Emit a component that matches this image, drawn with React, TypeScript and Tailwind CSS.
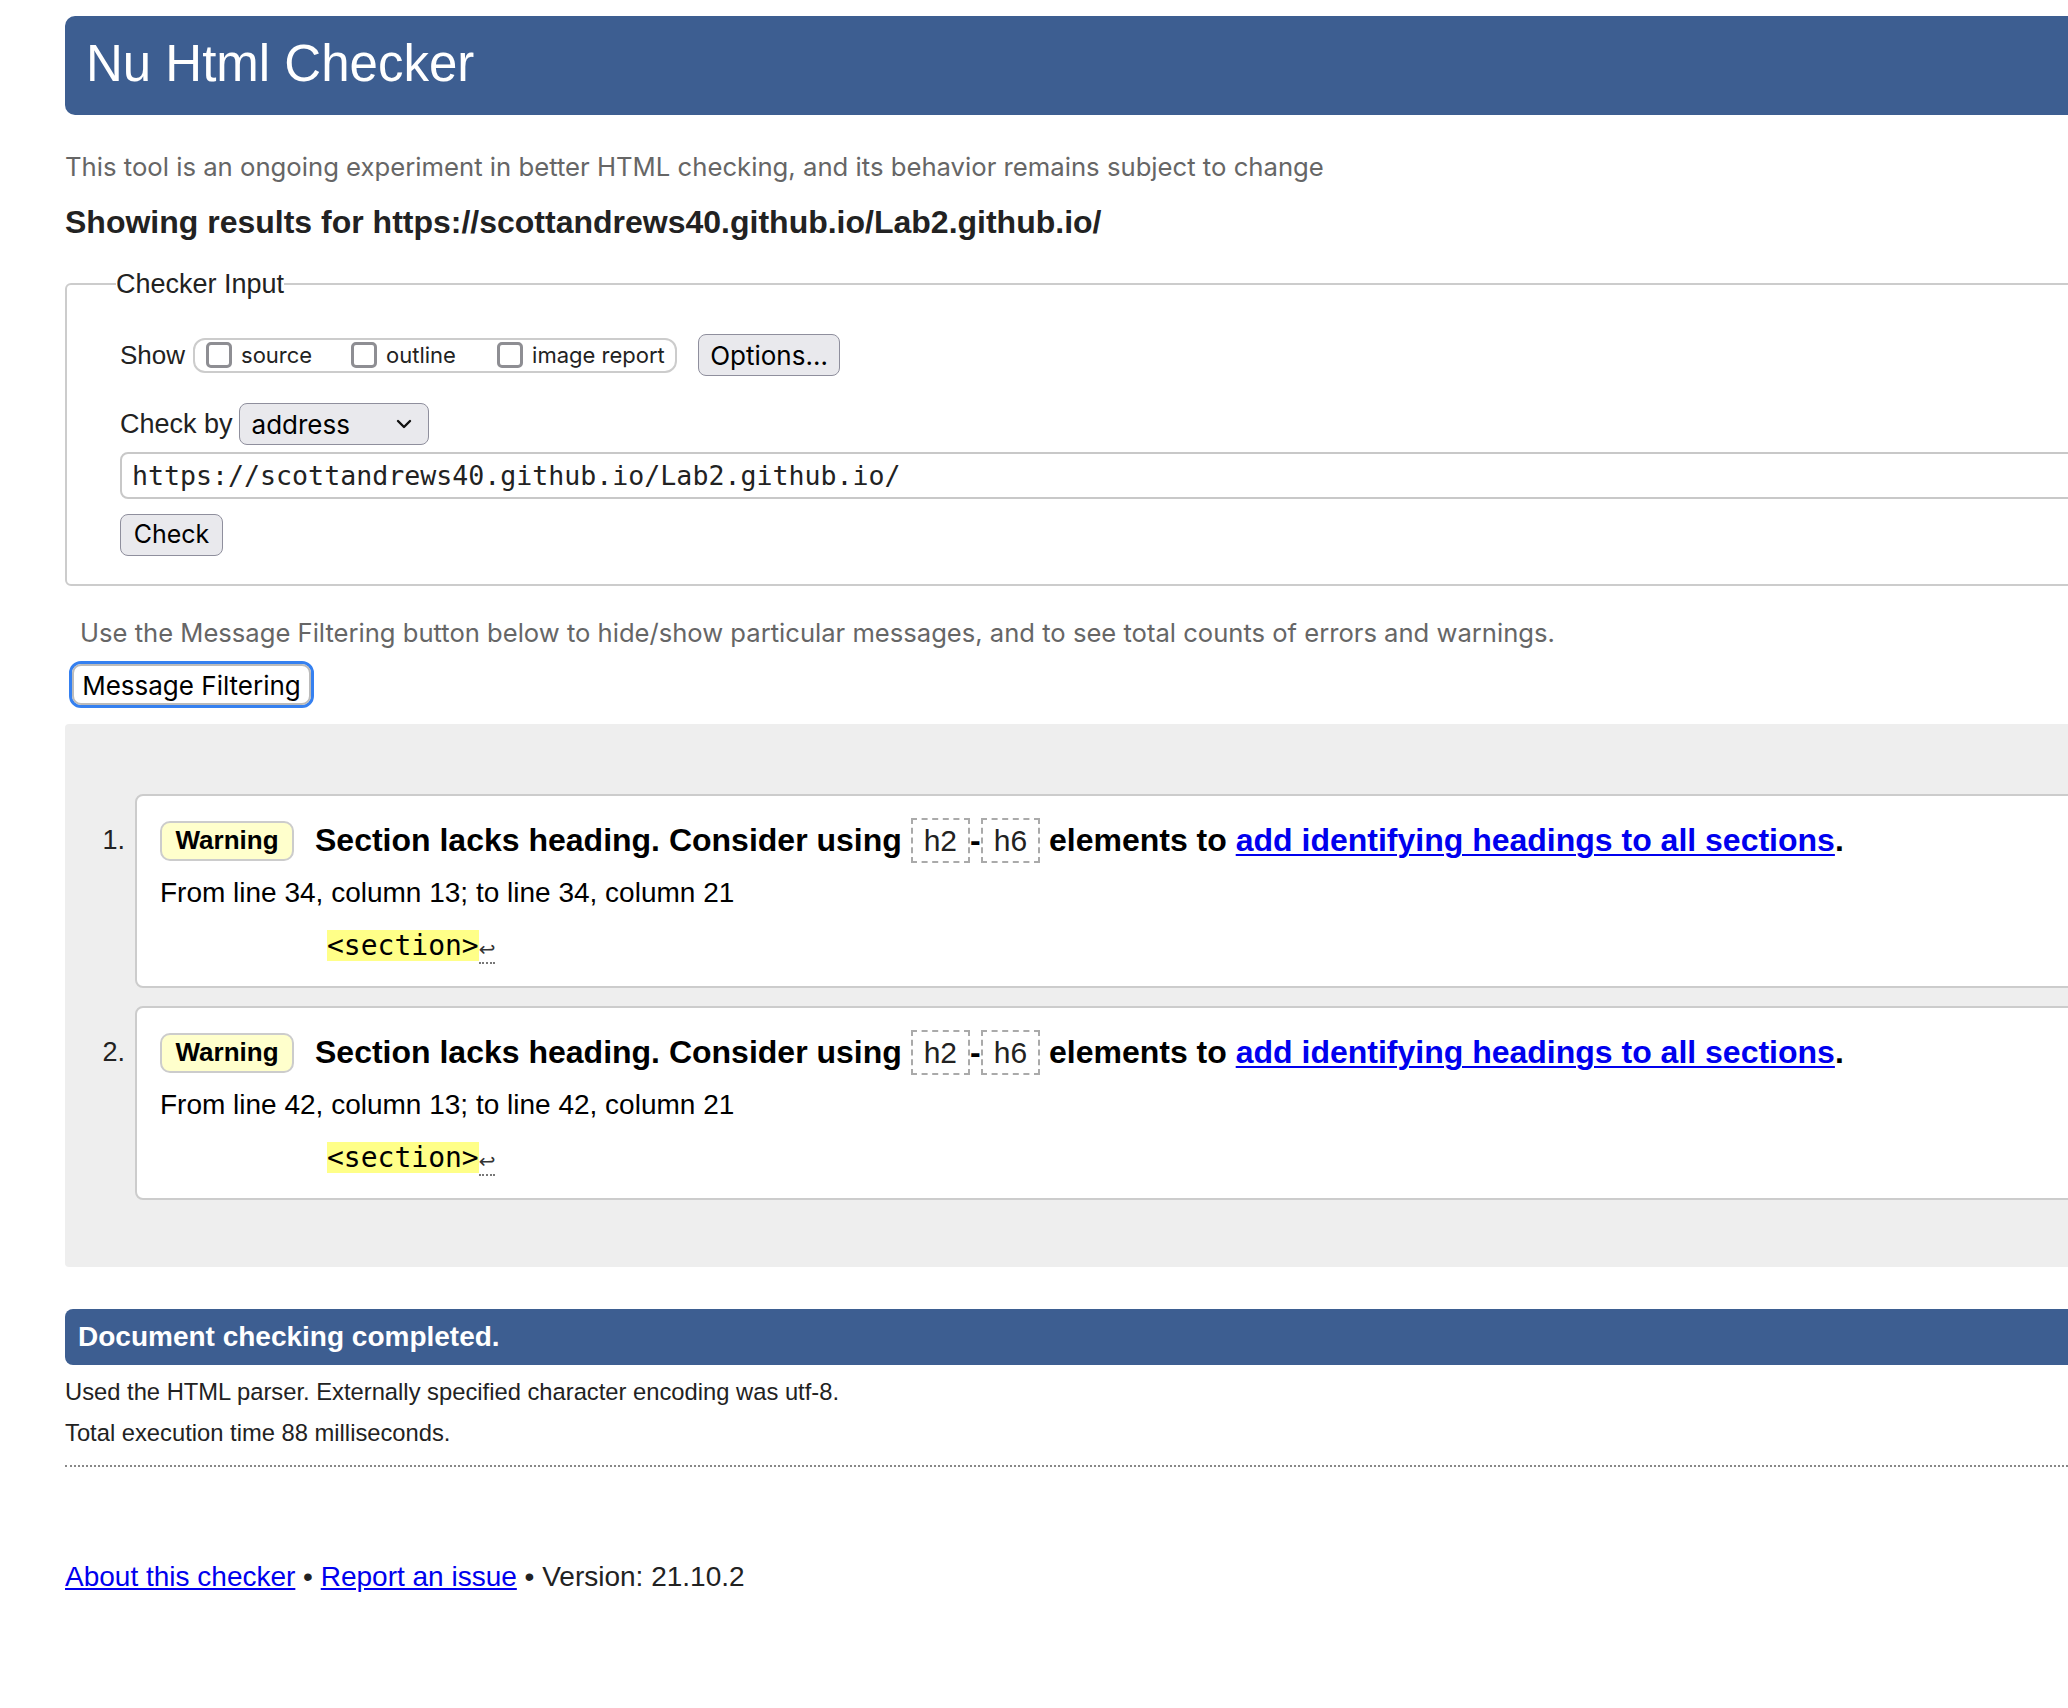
import React from "react";

const SANS = "font-['Liberation_Sans',Arial,Helvetica,sans-serif]";
const SYS = "font-['Inter','Noto_Sans',sans-serif]";
const MONO = "font-['DejaVu_Sans_Mono','Liberation_Mono',monospace]";

function CodeBox({ children }: { children: React.ReactNode }) {
  return (
    <code className="inline-block align-top h-[45px] leading-[41px] px-[11px] border-2 border-dashed border-[#aaaaaa] font-['Liberation_Sans',Arial,sans-serif] font-normal text-[30px] text-[#222]">
      {children}
    </code>
  );
}

function Msg({ n, from }: { n: number; from: string }) {
  return (
    <li className="flex items-start">
      <div className="w-[35px] pr-[10px] mt-[24px] h-[45px] flex items-center justify-end text-[27px] text-[#222]">
        {n}.
      </div>
      <div className="flex-1 bg-white border-2 border-[#cccccc] rounded-l-[8px] pl-[23px] pt-[22px] pb-[25px]">
        <div className="flex items-center h-[45px]">
          <span className="h-[40px] w-[134px] shrink-0 rounded-[10px] border-2 border-[#cccccc] bg-[#ffffcc] flex items-center justify-center text-[26px] font-bold text-black">
            Warning
          </span>
          <span className="ml-[21px] text-[32px] font-bold text-black leading-[45px] whitespace-nowrap">
            Section lacks heading. Consider using{" "}
            <CodeBox>h2</CodeBox>-<CodeBox>h6</CodeBox> elements to{" "}
            <a href="#" className="text-[#0000ee] underline decoration-2 underline-offset-[3px]">
              add identifying headings to all sections
            </a>
            .
          </span>
        </div>
        <div className="mt-[14px] text-[28px] leading-[32px] text-black">{from}</div>
        <div className="mt-[21px] ml-[167px] flex items-start h-[31px]">
          <span className={`${MONO} text-[28px] leading-[31px] bg-[#ffff88] text-black`}>&lt;section&gt;</span>
          <span className="font-['DejaVu_Sans',sans-serif] text-[20px] leading-[22px] text-[#333] border-b-2 border-dotted border-[#777] mt-[8px] pb-[2px]">
            ↩
          </span>
        </div>
      </div>
    </li>
  );
}

function Check({ label }: { label: string }) {
  return (
    <span className="flex items-center">
      <span className="w-[26px] h-[26px] rounded-[5px] border-[3px] border-[#8e8e93] bg-white" />
      <span className={`${SYS} ml-[9px] text-[22px] text-[#222]`}>{label}</span>
    </span>
  );
}

export default function App() {
  return (
    <div className={`w-full min-h-screen overflow-hidden bg-white ${SANS}`}>
      <div className="w-[2200px] pl-[65px] pb-[100px]">
        <h1 className="mt-[16px] h-[99px] rounded-l-[10px] bg-[#3d5e91] flex items-center pl-[21px] pb-[4px] text-white text-[51px] leading-none">
          Nu Html Checker
        </h1>

        <p className={`${SYS} mt-[37px] text-[25.7px] leading-[30px] text-[#666]`}>
          This tool is an ongoing experiment in better HTML checking, and its behavior remains subject to change
        </p>

        <h2 className="mt-[21px] text-[32px] leading-[38px] font-bold text-[#222]">
          Showing results for https://scottandrews40.github.io/Lab2.github.io/
        </h2>

        <fieldset className="mt-[27px] border-2 border-[#cccccc] rounded-l-[6px] pl-[49px] pb-[28px]">
          <legend className="text-[27px] leading-[32px] text-[#222]">Checker Input</legend>
          <div className="ml-[4px]">
            <div className="mt-[34px] flex items-center h-[42px]">
              <span className="text-[26px] text-[#222]">Show</span>
              <div className="ml-[8px] h-[35px] w-[484px] rounded-[12px] border-2 border-[#cccccc] flex items-center pl-[11px]">
                <span className="w-[145px]"><Check label="source" /></span>
                <span className="w-[146px]"><Check label="outline" /></span>
                <span><Check label="image report" /></span>
              </div>
              <button className={`${SYS} ml-[21px] h-[42px] w-[142px] rounded-[8px] border-[1.5px] border-[#8f8f9d] bg-[#e9e9ed] text-[26px] text-black`}>
                Options…
              </button>
            </div>

            <div className="mt-[27px] flex items-center h-[42px]">
              <span className="text-[27px] text-[#222]">Check by</span>
              <div className={`${SYS} ml-[6px] h-[42px] w-[190px] rounded-[8px] border-[1.5px] border-[#8f8f9d] bg-[#e9e9ed] flex items-center justify-between pl-[12px] pr-[16px] text-[26px] text-black`}>
                <span>address</span>
                <svg width="16" height="10" viewBox="0 0 16 10" fill="none">
                  <path d="M2 2 L8 8 L14 2" stroke="#111" strokeWidth="2.4" strokeLinecap="round" strokeLinejoin="round" />
                </svg>
              </div>
            </div>

            <div className={`${MONO} mt-[7px] h-[47px] rounded-l-[8px] border-2 border-[#c8c8c8] flex items-center pl-[10px] text-[26.6px] text-[#222]`}>
              https://scottandrews40.github.io/Lab2.github.io/
            </div>

            <button className={`${SYS} mt-[15px] h-[42px] w-[103px] rounded-[8px] border-[1.5px] border-[#8f8f9d] bg-[#e9e9ed] text-[25px] text-black`}>
              Check
            </button>
          </div>
        </fieldset>

        <p className={`${SYS} mt-[32px] ml-[15px] text-[25.6px] leading-[30px] text-[#666]`}>
          Use the Message Filtering button below to hide/show particular messages, and to see total counts of errors and warnings.
        </p>

        <div className="mt-[13px] ml-[4px] w-[245px] h-[47px] rounded-[12px] border-[3px] border-[#3580f0] flex">
          <button className={`${SYS} flex-1 rounded-[9px] border-2 border-[#bbbbbb] bg-white text-[26px] text-black`}>
            Message Filtering
          </button>
        </div>

        <div className="mt-[16px] bg-[#eeeeee] rounded-l-[4px] pl-[35px] pt-[70px] pb-[67px]">
          <ol className="flex flex-col gap-[18px]">
            <Msg n={1} from="From line 34, column 13; to line 34, column 21" />
            <Msg n={2} from="From line 42, column 13; to line 42, column 21" />
          </ol>
        </div>

        <div className="mt-[42px] h-[56px] rounded-l-[8px] bg-[#3d5e91] flex items-center pl-[13px] text-white text-[28px] font-bold">
          Document checking completed.
        </div>

        <p className="mt-[12px] text-[23.75px] leading-[30px] text-[#222]">
          Used the HTML parser. Externally specified character encoding was utf-8.
        </p>
        <p className="mt-[11px] text-[23.75px] leading-[30px] text-[#222]">Total execution time 88 milliseconds.</p>

        <div className="mt-[17px] border-t-2 border-dotted border-[#888888]" />

        <p className="mt-[93px] text-[28px] leading-[34px] text-[#222]">
          <a href="#" className="text-[#0000ee] underline">About this checker</a> •{" "}
          <a href="#" className="text-[#0000ee] underline">Report an issue</a> • Version: 21.10.2
        </p>
      </div>
    </div>
  );
}
